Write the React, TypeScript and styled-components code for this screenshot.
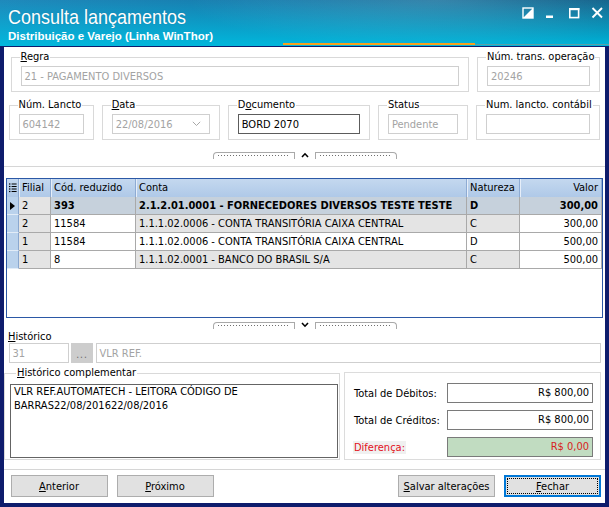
import React from "react"
import styled, { createGlobalStyle } from "styled-components"

const navy = "#0e1c6c"
const uiFont = `"DejaVu Sans Condensed", "DejaVu Sans", sans-serif`

const GlobalStyle = createGlobalStyle`
  html, body {
    margin: 0;
    padding: 0;
    background: ${navy};
  }
  body {
    font-family: ${uiFont};
    font-stretch: condensed;
    font-size: 11px;
    color: #000;
  }
  * {
    box-sizing: border-box;
  }
`

const Window = styled.div`
  width: 609px;
  height: 507px;
  display: flex;
  flex-direction: column;
  overflow: hidden;
`

const TitleBar = styled.header`
  height: 47px;
  flex: none;
  display: flex;
  justify-content: space-between;
  padding: 0 6px 0 8px;
  border-bottom: 1px solid ${navy};
  background:
    linear-gradient(#f7a01e, #f7a01e) 283px 43px / 192px 2px no-repeat,
    linear-gradient(#5c9ea6, #5c9ea6) 475px 44px / 134px 1px no-repeat,
    radial-gradient(ellipse 360px 70px at 72% 0%, rgba(255, 255, 255, 0.16), rgba(255, 255, 255, 0) 70%),
    linear-gradient(180deg, rgba(0, 186, 222, 0) 0%, rgba(0, 186, 222, 0.95) 100%),
    linear-gradient(90deg, #1f89bb 0%, #157cad 45%, #0a5d87 100%);
`

const TitleBlock = styled.div`
  padding-top: 7px;
  color: #fff;
`

const Title = styled.div`
  font-family: "Liberation Sans", Arial, sans-serif;
  font-size: 18px;
  line-height: 22px;
  transform: scaleY(1.08);
  transform-origin: left bottom;
  text-shadow: 0 0 1px rgba(0, 40, 80, 0.3);
`

const SubTitle = styled.div`
  margin-top: 1px;
  font-family: "Liberation Sans", Arial, sans-serif;
  font-weight: bold;
  font-size: 11.5px;
  line-height: 13px;
`

const Controls = styled.div`
  display: flex;
  gap: 11px;
  padding-top: 7px;
`

const Body = styled.main`
  flex: 1;
  display: flex;
  flex-direction: column;
  background: #fff;
  border: 4px solid ${navy};
  border-top: 0;
`

const FieldRow = styled.div<{ $mt: number; $pl: number; $spread?: boolean }>`
  display: flex;
  gap: 8px;
  justify-content: ${({ $spread }) => ($spread ? "space-between" : "flex-start")};
  margin-top: ${({ $mt }) => $mt}px;
  padding: 0 5px 0 ${({ $pl }) => $pl}px;
`

const Group = styled.fieldset<{ $w?: number }>`
  margin: 0;
  min-width: 0;
  padding: 3px 9px 5px;
  border: 1px solid #d9d9d9;
  ${({ $w }) => ($w ? `width: ${$w}px; flex: none;` : "flex: 1;")}
`

const Legend = styled.legend<{ $ml?: number }>`
  padding: 0 1px;
  margin-left: ${({ $ml }) => $ml ?? -1}px;
  line-height: 12px;
  white-space: nowrap;
`

const Key = styled.span`
  text-decoration: underline;
`

const TextBox = styled.div<{ $active?: boolean }>`
  height: 20px;
  display: flex;
  align-items: center;
  justify-content: space-between;
  padding: 0 3px;
  border: 1px solid ${({ $active }) => ($active ? "#5c5c5c" : "#cfcfcf")};
  color: ${({ $active }) => ($active ? "#000" : "#a3a3a3")};
  background: #fff;
  white-space: nowrap;
  overflow: hidden;
`

const SplitHandle = styled.div<{ $mt: number }>`
  display: flex;
  justify-content: center;
  align-items: flex-start;
  gap: 6px;
  height: 8px;
  margin-top: ${({ $mt }) => $mt}px;
`

const Grip = styled.div<{ $side: "left" | "right" }>`
  position: relative;
  width: 82px;
  height: 7px;
  border: 1px solid #a9a9a9;
  border-bottom: 0;
  border-radius: ${({ $side }) => ($side === "left" ? "4px 0 0 0" : "0 4px 0 0")};

  &::after {
    content: "";
    position: absolute;
    left: 4px;
    right: 4px;
    top: 2px;
    height: 1px;
    background: repeating-linear-gradient(90deg, #6f6f6f 0 1px, transparent 1px 3px);
  }
`

const Caret = styled.svg`
  width: 8px;
  height: 6px;
`

const Separator = styled.div<{ $mt: number }>`
  height: 1px;
  margin-top: ${({ $mt }) => $mt}px;
  background: #d6d6d6;
`

const GridBox = styled.div`
  margin: 11px 2px 0;
  height: 140px;
  border: 1px solid #2b58a6;
  background: #fff;
`

const GridRow = styled.div`
  display: grid;
  grid-template-columns: 12px 32px 85px 331px 53px 1fr;
  height: 18px;
`

const HeadCell = styled.div<{ $right?: boolean }>`
  padding: 0 3px;
  line-height: 18px;
  text-align: ${({ $right }) => ($right ? "right" : "left")};
  background: linear-gradient(180deg, #c4d8ef 0%, #afc9e8 100%);
  border-right: 1px solid #8eabd3;
  box-shadow: inset 1px 0 #e6eef9;
  white-space: nowrap;
  overflow: hidden;
`

const Indicator = styled.div<{ $head?: boolean }>`
  display: flex;
  align-items: center;
  justify-content: center;
  background: ${({ $head }) => ($head ? "linear-gradient(180deg, #c4d8ef 0%, #afc9e8 100%)" : "#bad2ec")};
  border-right: 1px solid #8aa8d0;
  border-bottom: ${({ $head }) => ($head ? "0" : "1px solid #e2ecf7")};
`

const Cell = styled.div<{ $bg: string; $right?: boolean; $bold?: boolean }>`
  padding: 0 3px;
  line-height: 17px;
  background: ${({ $bg }) => $bg};
  border-right: 1px solid #a9a9a9;
  border-bottom: 1px solid #a9a9a9;
  text-align: ${({ $right }) => ($right ? "right" : "left")};
  font-weight: ${({ $bold }) => ($bold ? "bold" : "normal")};
  white-space: nowrap;
  overflow: hidden;
`

const HistLabel = styled.div`
  padding-left: 4px;
  line-height: 13px;
`

const HistRow = styled.div`
  display: grid;
  grid-template-columns: 60px 22px 1fr;
  column-gap: 2.5px;
  padding: 0 4px 0 4.5px;
`

const DotsButton = styled.div`
  height: 20px;
  background: #cdcdcd;
  color: #6a6a6a;
  text-align: center;
  line-height: 24px;
  font-size: 10px;
  letter-spacing: 1px;
`

const Panels = styled.div`
  display: flex;
  align-items: flex-end;
  gap: 4px;
  margin-top: 4px;
  padding-right: 4px;
`

const MemoGroup = styled.fieldset`
  margin: 0;
  width: 336px;
  flex: none;
  padding: 5px 1px 1px 5px;
  border: 1px solid #d9d9d9;
`

const Memo = styled.div`
  height: 74px;
  padding: 0 3px;
  border: 1px solid #646464;
  line-height: 14px;
`

const TotalsPanel = styled.div`
  flex: 1;
  height: 88px;
  display: grid;
  grid-template-columns: 1fr 146px;
  row-gap: 7px;
  align-content: start;
  align-items: center;
  padding: 10px 7px 0 8px;
  border: 1px solid #dcdcdc;
`

const TotalLabel = styled.span<{ $alert?: boolean }>`
  justify-self: start;
  padding: 0 1px;
  color: ${({ $alert }) => ($alert ? "#e3101c" : "#000")};
  background: ${({ $alert }) => ($alert ? "#f0f0f0" : "transparent")};
`

const MoneyBox = styled.div<{ $bg?: string; $alert?: boolean }>`
  height: 20px;
  padding-right: 3px;
  border: 1px solid #7a7a7a;
  background: ${({ $bg }) => $bg ?? "#fff"};
  color: ${({ $alert }) => ($alert ? "#d81e1e" : "#000")};
  text-align: right;
  line-height: 18px;
`

const ButtonBar = styled.div`
  display: flex;
  gap: 9px;
  padding: 5px 4px 0 6.5px;
`

const Button = styled.button<{ $primary?: boolean; $push?: boolean }>`
  width: 97px;
  height: 22px;
  padding: 0;
  margin-left: ${({ $push }) => ($push ? "auto" : "0")};
  font-family: ${uiFont};
  font-stretch: condensed;
  font-size: 11px;
  color: #000;
  background: #e1e1e1;
  border: ${({ $primary }) => ($primary ? "2px solid #0078d7" : "1px solid #adadad")};
  outline: ${({ $primary }) => ($primary ? "1px dotted #000" : "none")};
  outline-offset: -4px;
`

const rows = [
  { filial: "2", cod: "393", conta: "2.1.2.01.0001 - FORNECEDORES DIVERSOS TESTE TESTE", natureza: "D", valor: "300,00" },
  { filial: "2", cod: "11584", conta: "1.1.1.02.0006 - CONTA TRANSITÓRIA CAIXA CENTRAL", natureza: "C", valor: "300,00" },
  { filial: "1", cod: "11584", conta: "1.1.1.02.0006 - CONTA TRANSITÓRIA CAIXA CENTRAL", natureza: "D", valor: "500,00" },
  { filial: "1", cod: "8", conta: "1.1.1.02.0001 - BANCO DO BRASIL S/A", natureza: "C", valor: "500,00" },
]

const gray = "#e4e4e4"
const selected = "#c6d1dc"

function Splitter({ mt, up }: { mt: number; up?: boolean }) {
  return (
    <SplitHandle $mt={mt}>
      <Grip $side="left" />
      <Caret viewBox="0 0 8 6">
        <polyline
          points={up ? "1,5 4,1.8 7,5" : "1,1 4,4.2 7,1"}
          fill="none"
          stroke="#000"
          strokeWidth="1.6"
        />
      </Caret>
      <Grip $side="right" />
    </SplitHandle>
  )
}

function WindowControls() {
  return (
    <Controls>
      <svg width="12" height="12" viewBox="0 0 12 12">
        <rect x="1" y="1" width="10" height="10" fill="none" stroke="#fff" strokeWidth="1.4" />
        <polygon points="11,1 11,11 1,11" fill="#fff" />
      </svg>
      <svg width="12" height="12" viewBox="0 0 12 12">
        <rect x="1" y="8.5" width="7" height="2.5" fill="#fff" />
      </svg>
      <svg width="12" height="12" viewBox="0 0 12 12">
        <rect x="1.8" y="1.8" width="8.8" height="8.8" fill="none" stroke="#fff" strokeWidth="1.6" />
        <rect x="1" y="1" width="10.4" height="2.2" fill="#fff" />
      </svg>
      <svg width="12" height="12" viewBox="0 0 12 12">
        <path d="M1.5 1 L11 10.5 M11 1 L1.5 10.5" stroke="#fff" strokeWidth="1.9" />
      </svg>
    </Controls>
  )
}

export default function App() {
  return (
    <>
      <GlobalStyle />
      <Window>
        <TitleBar>
          <TitleBlock>
            <Title>Consulta lançamentos</Title>
            <SubTitle>Distribuição e Varejo (Linha WinThor)</SubTitle>
          </TitleBlock>
          <WindowControls />
        </TitleBar>

        <Body>
          <FieldRow $mt={4} $pl={6.5}>
            <Group>
              <Legend>
                <Key>R</Key>egra
              </Legend>
              <TextBox>21 - PAGAMENTO DIVERSOS</TextBox>
            </Group>
            <Group $w={123}>
              <Legend>Núm. trans. operação</Legend>
              <TextBox>20246</TextBox>
            </Group>
          </FieldRow>

          <FieldRow $mt={7} $pl={4.5} $spread>
            <Group $w={85}>
              <Legend>Núm. Lancto</Legend>
              <TextBox>604142</TextBox>
            </Group>
            <Group $w={118}>
              <Legend>
                <Key>D</Key>ata
              </Legend>
              <TextBox>
                22/08/2016
                <svg width="9" height="6" viewBox="0 0 9 6" style={{ marginRight: 5 }}>
                  <polyline points="0.8,0.8 4.5,4.5 8.2,0.8" fill="none" stroke="#a8a8a8" strokeWidth="1" />
                </svg>
              </TextBox>
            </Group>
            <Group $w={142}>
              <Legend>
                D<Key>o</Key>cumento
              </Legend>
              <TextBox $active>BORD 2070</TextBox>
            </Group>
            <Group $w={90}>
              <Legend>Status</Legend>
              <TextBox>Pendente</TextBox>
            </Group>
            <Group $w={124}>
              <Legend>Num. lancto. contábil</Legend>
              <TextBox />
            </Group>
          </FieldRow>

          <Splitter mt={12} up />
          <Separator $mt={6} />

          <GridBox>
            <GridRow>
              <Indicator $head>
                <svg width="8" height="10" viewBox="0 0 8 10">
                  {[1, 3.5, 6, 8.5].map(y => (
                    <g key={y}>
                      <rect x="0" y={y - 0.6} width="1.4" height="1.2" fill="#000" />
                      <rect x="2.6" y={y - 0.5} width="5" height="1" fill="#000" />
                    </g>
                  ))}
                </svg>
              </Indicator>
              <HeadCell>Filial</HeadCell>
              <HeadCell>Cód. reduzido</HeadCell>
              <HeadCell>Conta</HeadCell>
              <HeadCell>Natureza</HeadCell>
              <HeadCell $right>Valor</HeadCell>
            </GridRow>
            {rows.map((row, i) => {
              const isSel = i === 0
              const alt = i % 2 === 1 ? gray : "#fff"
              return (
                <GridRow key={i}>
                  <Indicator>
                    {isSel ? (
                      <svg width="5" height="8" viewBox="0 0 5 8">
                        <polygon points="0,0 5,4 0,8" fill="#000" />
                      </svg>
                    ) : null}
                  </Indicator>
                  <Cell $bg={gray}>{row.filial}</Cell>
                  <Cell $bg={isSel ? selected : "#fff"} $bold={isSel}>
                    {row.cod}
                  </Cell>
                  <Cell $bg={isSel ? selected : alt} $bold={isSel}>
                    {row.conta}
                  </Cell>
                  <Cell $bg={isSel ? selected : alt} $bold={isSel}>
                    {row.natureza}
                  </Cell>
                  <Cell $bg={isSel ? selected : "#fff"} $bold={isSel} $right>
                    {row.valor}
                  </Cell>
                </GridRow>
              )
            })}
          </GridBox>

          <Splitter mt={4} />

          <HistLabel>
            <Key>H</Key>istórico
          </HistLabel>
          <HistRow>
            <TextBox>31</TextBox>
            <DotsButton>...</DotsButton>
            <TextBox>VLR REF.</TextBox>
          </HistRow>

          <Panels>
            <MemoGroup>
              <Legend $ml={6}>
                <Key>H</Key>istórico complementar
              </Legend>
              <Memo>VLR REF.AUTOMATECH - LEITORA CÓDIGO DE BARRAS22/08/201622/08/2016</Memo>
            </MemoGroup>
            <TotalsPanel>
              <TotalLabel>Total de Débitos:</TotalLabel>
              <MoneyBox>R$ 800,00</MoneyBox>
              <TotalLabel>Total de Créditos:</TotalLabel>
              <MoneyBox>R$ 800,00</MoneyBox>
              <TotalLabel $alert>Diferença:</TotalLabel>
              <MoneyBox $bg="#c1dcc1" $alert>
                R$ 0,00
              </MoneyBox>
            </TotalsPanel>
          </Panels>

          <Separator $mt={9} />

          <ButtonBar>
            <Button>
              <Key>A</Key>nterior
            </Button>
            <Button>
              <Key>P</Key>róximo
            </Button>
            <Button $push>
              <Key>S</Key>alvar alterações
            </Button>
            <Button $primary>
              <Key>F</Key>echar
            </Button>
          </ButtonBar>
        </Body>
      </Window>
    </>
  )
}
